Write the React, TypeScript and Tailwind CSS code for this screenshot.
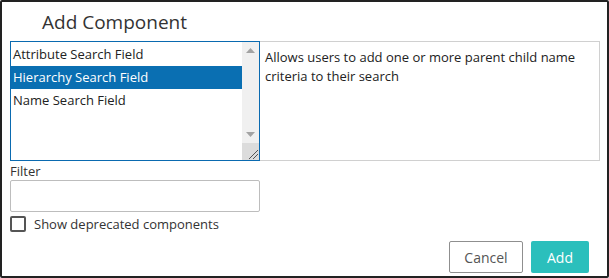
import React, { useState } from "react";

const ITEMS = ["Attribute Search Field", "Hierarchy Search Field", "Name Search Field"];

function ScrollArrow({ up }: { up?: boolean }) {
  return (
    <svg width="9" height="5" viewBox="0 0 9 5" className="fill-[#a3a3a3]">
      {up ? <path d="M0 5 L4.5 0 L9 5 Z" /> : <path d="M0 0 L4.5 5 L9 0 Z" />}
    </svg>
  );
}

export default function App() {
  const [selected, setSelected] = useState(1);
  const [showDeprecated, setShowDeprecated] = useState(false);

  return (
    <div
      className="w-[609px] h-[278px] bg-white border-2 border-[#222] rounded-[2px] flex flex-col text-[#333]"
      style={{ fontFamily: '"Open Sans", "Noto Sans", sans-serif' }}
    >
      {/* Title */}
      <div className="pl-[40px] pt-[7px] h-[39px] text-[19px] leading-[26px] text-[#333]">Add Component</div>

      {/* List + description */}
      <div className="flex pl-[8px] pr-[7px] h-[120px]">
        <div className="relative w-[250px] h-full border border-[#0a6ab0] flex">
          <div className="flex-1 pt-[1px]">
            {ITEMS.map((item, i) => (
              <div
                key={item}
                onClick={() => setSelected(i)}
                className={`h-[23px] pl-[2px] text-[13px] leading-[23px] cursor-default ${
                  i === selected ? "bg-[#0a6fb2] text-white" : "text-[#222]"
                }`}
              >
                {item}
              </div>
            ))}
          </div>
          <div className="w-[17px] h-full bg-[#f0f0f0] flex flex-col items-center">
            <div className="h-[17px] flex items-center justify-center">
              <ScrollArrow up />
            </div>
            <div className="flex-1" />
            <div className="h-[17px] flex items-center justify-center">
              <ScrollArrow />
            </div>
            <div className="h-[17px] w-full bg-[#dcdcdc] flex items-end justify-end">
              <svg width="12" height="12" viewBox="0 0 12 12" className="stroke-[#555]">
                <path d="M2 11 L11 2 M6 11 L11 6" strokeWidth="1" />
              </svg>
            </div>
          </div>
        </div>
        <div className="flex-1 h-full border border-l-0 border-[#d0d0d0] px-[5px] pt-[6px] text-[13px] leading-[19px] text-[#222]">
          Allows users to add one or more parent child name criteria to their search
        </div>
      </div>

      {/* Filter */}
      <div className="pl-[8px] pt-[2px] text-[13px] leading-[17px] text-[#333]">Filter</div>
      <div className="pl-[8px]">
        <input className="w-[250px] h-[32px] border border-[#bdbdbd] rounded-[2px] px-2 text-[13px] outline-none" />
      </div>

      {/* Checkbox */}
      <label className="flex items-center pl-[8px] pt-[3px] gap-[8px] text-[13px] leading-[18px] text-[#333] cursor-pointer">
        <span
          onClick={() => setShowDeprecated(!showDeprecated)}
          className="w-[16px] h-[16px] border-2 border-[#555] rounded-[2px] bg-white flex items-center justify-center"
        >
          {showDeprecated && <span className="w-[8px] h-[8px] bg-[#555]" />}
        </span>
        Show deprecated components
      </label>

      {/* Footer */}
      <div className="flex justify-end gap-[8px] pr-[18px] mt-auto pb-[3px]">
        <button className="w-[74px] h-[32px] border border-[#8f8f8f] rounded-[2px] bg-white text-[14px] text-[#555]">
          Cancel
        </button>
        <button className="w-[58px] h-[32px] rounded-[2px] bg-[#2bbfbc] text-[14px] text-white">Add</button>
      </div>
    </div>
  );
}
